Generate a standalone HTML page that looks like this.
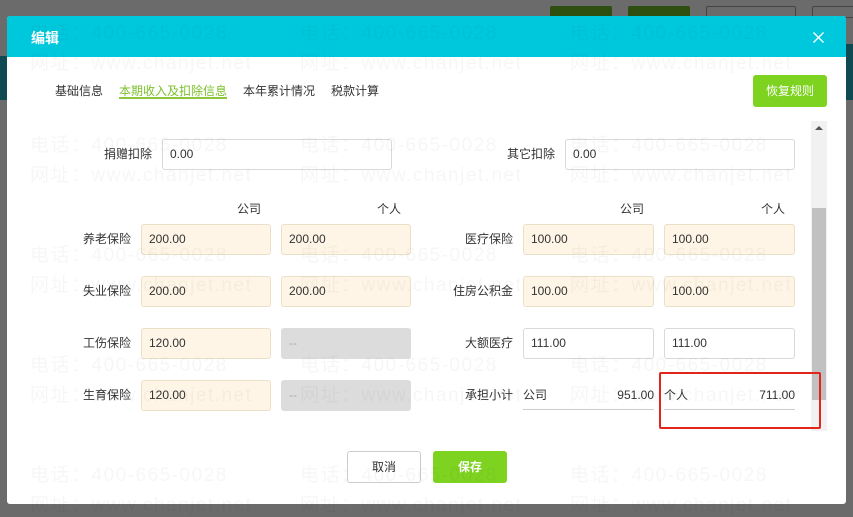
<!DOCTYPE html>
<html><head><meta charset="utf-8"><style>
*{box-sizing:border-box;margin:0;padding:0}
body{width:853px;height:512px;overflow:hidden;background:#6b6b6b;font-family:"Liberation Sans","Noto Sans CJK SC",sans-serif;font-size:12px;color:#333;position:relative}
.a{position:absolute}
.modal{left:7px;top:16px;width:839px;height:488px;background:#fff;border-radius:3px;overflow:hidden}
.hd{left:0;top:0;width:839px;height:41px;background:#00c8dc;color:#fff;font-size:14px;font-weight:bold;padding:12px 0 0 24px}
.wm{color:rgba(0,0,0,0.035);font-size:19px;letter-spacing:1.5px;white-space:nowrap}
.inp{position:absolute;height:31px;border:1px solid #d9d9d9;border-radius:3px;padding:0 7px;line-height:29px;font-size:12px;color:#333}
.bg{background:#fef5e6;border-color:#ecdfc8}
.dis{background:#dcdcdc;border-color:#dcdcdc;color:#aaa}
.lb{position:absolute;text-align:right;width:80px;font-size:12px;line-height:31px}
.tab{position:absolute;top:82px;font-size:12px}
</style></head><body>
<div class="a" style="left:550px;top:6px;width:62px;height:12px;background:#2f4f10;border-radius:2px"></div>
<div class="a" style="left:628px;top:6px;width:62px;height:12px;background:#2f4f10;border-radius:2px"></div>
<div class="a" style="left:706px;top:6px;width:90px;height:12px;border:1px solid #444;border-radius:2px"></div>
<div class="a" style="left:812px;top:6px;width:45px;height:12px;border:1px solid #444;border-radius:2px"></div>
<div class="a" style="left:0;top:56px;width:7px;height:44px;background:#0f4a52"></div>
<div class="a" style="left:846px;top:44px;width:7px;height:56px;background:#0f4a52"></div>
<div class="a modal">
<div class="a hd">编辑</div>
<svg class="a" style="left:806px;top:16px" width="11" height="11" viewBox="0 0 11 11"><path d="M0.5 0.5L10.5 10.5M10.5 0.5L0.5 10.5" stroke="#fff" stroke-width="1.4"/></svg>
</div>
<div class="tab" style="left:55px">基础信息</div>
<div class="tab" style="left:119px;color:#7cc12c">本期收入及扣除信息</div>
<div class="a" style="left:119px;top:97px;width:108px;height:2px;background:#8cc63f"></div>
<div class="tab" style="left:243px">本年累计情况</div>
<div class="tab" style="left:331px">税款计算</div>
<div class="a" style="left:753px;top:75px;width:74px;height:32px;background:#7ed321;border-radius:3px;color:#fff;text-align:center;line-height:32px;font-size:12px">恢复规则</div>

<div class="a" style="left:811px;top:121px;width:16px;height:310px;background:#f1f1f1"></div>
<div class="a" style="left:812px;top:208px;width:14px;height:192px;background:#c1c1c1"></div>
<div class="a" style="left:815px;top:126px;width:0;height:0;border-left:4px solid transparent;border-right:4px solid transparent;border-bottom:4px solid #555"></div>

<div class="lb" style="left:72px;top:139px">捐赠扣除</div>
<div class="inp" style="left:162px;top:139px;width:230px">0.00</div>
<div class="lb" style="left:475px;top:139px">其它扣除</div>
<div class="inp" style="left:565px;top:139px;width:230px">0.00</div>

<div class="a" style="left:237px;top:200px">公司</div>
<div class="a" style="left:377px;top:200px">个人</div>
<div class="a" style="left:620px;top:200px">公司</div>
<div class="a" style="left:761px;top:200px">个人</div>

<div class="lb" style="left:51px;top:224px">养老保险</div>
<div class="inp bg" style="left:141px;top:224px;width:130px">200.00</div>
<div class="inp bg" style="left:281px;top:224px;width:130px">200.00</div>
<div class="lb" style="left:433px;top:224px">医疗保险</div>
<div class="inp bg" style="left:523px;top:224px;width:131px">100.00</div>
<div class="inp bg" style="left:664px;top:224px;width:131px">100.00</div>

<div class="lb" style="left:51px;top:276px">失业保险</div>
<div class="inp bg" style="left:141px;top:276px;width:130px">200.00</div>
<div class="inp bg" style="left:281px;top:276px;width:130px">200.00</div>
<div class="lb" style="left:433px;top:276px">住房公积金</div>
<div class="inp bg" style="left:523px;top:276px;width:131px">100.00</div>
<div class="inp bg" style="left:664px;top:276px;width:131px">100.00</div>

<div class="lb" style="left:51px;top:328px">工伤保险</div>
<div class="inp bg" style="left:141px;top:328px;width:130px">120.00</div>
<div class="inp dis" style="left:281px;top:328px;width:130px">--</div>
<div class="lb" style="left:433px;top:328px">大额医疗</div>
<div class="inp" style="left:523px;top:328px;width:131px">111.00</div>
<div class="inp" style="left:664px;top:328px;width:131px">111.00</div>

<div class="lb" style="left:51px;top:380px">生育保险</div>
<div class="inp bg" style="left:141px;top:380px;width:130px">120.00</div>
<div class="inp dis" style="left:281px;top:380px;width:130px">--</div>
<div class="lb" style="left:433px;top:380px">承担小计</div>
<div class="a" style="left:523px;top:380px;width:131px;height:30px;border-bottom:1px solid #ccc;line-height:31px">公司<span style="float:right">951.00</span></div>
<div class="a" style="left:664px;top:380px;width:131px;height:30px;border-bottom:1px solid #ccc;line-height:31px">个人<span style="float:right">711.00</span></div>
<div class="a" style="left:659px;top:372px;width:162px;height:57px;border:2px solid #e3241b;border-radius:2px"></div>

<div class="a" style="left:347px;top:451px;width:74px;height:32px;border:1px solid #ccc;border-radius:3px;text-align:center;line-height:30px">取消</div>
<div class="a" style="left:433px;top:451px;width:74px;height:32px;background:#7ed321;border-radius:3px;text-align:center;line-height:32px;color:#fff;font-weight:bold">保存</div>

<div class="a wm" style="left:30px;top:18px">电话：400-665-0028</div>
<div class="a wm" style="left:300px;top:18px">电话：400-665-0028</div>
<div class="a wm" style="left:570px;top:18px">电话：400-665-0028</div>
<div class="a wm" style="left:30px;top:48px">网址：www.chanjet.net</div>
<div class="a wm" style="left:300px;top:48px">网址：www.chanjet.net</div>
<div class="a wm" style="left:570px;top:48px">网址：www.chanjet.net</div>
<div class="a wm" style="left:30px;top:130px">电话：400-665-0028</div>
<div class="a wm" style="left:300px;top:130px">电话：400-665-0028</div>
<div class="a wm" style="left:570px;top:130px">电话：400-665-0028</div>
<div class="a wm" style="left:30px;top:160px">网址：www.chanjet.net</div>
<div class="a wm" style="left:300px;top:160px">网址：www.chanjet.net</div>
<div class="a wm" style="left:570px;top:160px">网址：www.chanjet.net</div>
<div class="a wm" style="left:30px;top:240px">电话：400-665-0028</div>
<div class="a wm" style="left:300px;top:240px">电话：400-665-0028</div>
<div class="a wm" style="left:570px;top:240px">电话：400-665-0028</div>
<div class="a wm" style="left:30px;top:270px">网址：www.chanjet.net</div>
<div class="a wm" style="left:300px;top:270px">网址：www.chanjet.net</div>
<div class="a wm" style="left:570px;top:270px">网址：www.chanjet.net</div>
<div class="a wm" style="left:30px;top:350px">电话：400-665-0028</div>
<div class="a wm" style="left:300px;top:350px">电话：400-665-0028</div>
<div class="a wm" style="left:570px;top:350px">电话：400-665-0028</div>
<div class="a wm" style="left:30px;top:380px">网址：www.chanjet.net</div>
<div class="a wm" style="left:300px;top:380px">网址：www.chanjet.net</div>
<div class="a wm" style="left:570px;top:380px">网址：www.chanjet.net</div>
<div class="a wm" style="left:30px;top:460px">电话：400-665-0028</div>
<div class="a wm" style="left:300px;top:460px">电话：400-665-0028</div>
<div class="a wm" style="left:570px;top:460px">电话：400-665-0028</div>
<div class="a wm" style="left:30px;top:490px">网址：www.chanjet.net</div>
<div class="a wm" style="left:300px;top:490px">网址：www.chanjet.net</div>
<div class="a wm" style="left:570px;top:490px">网址：www.chanjet.net</div>
</body></html>
